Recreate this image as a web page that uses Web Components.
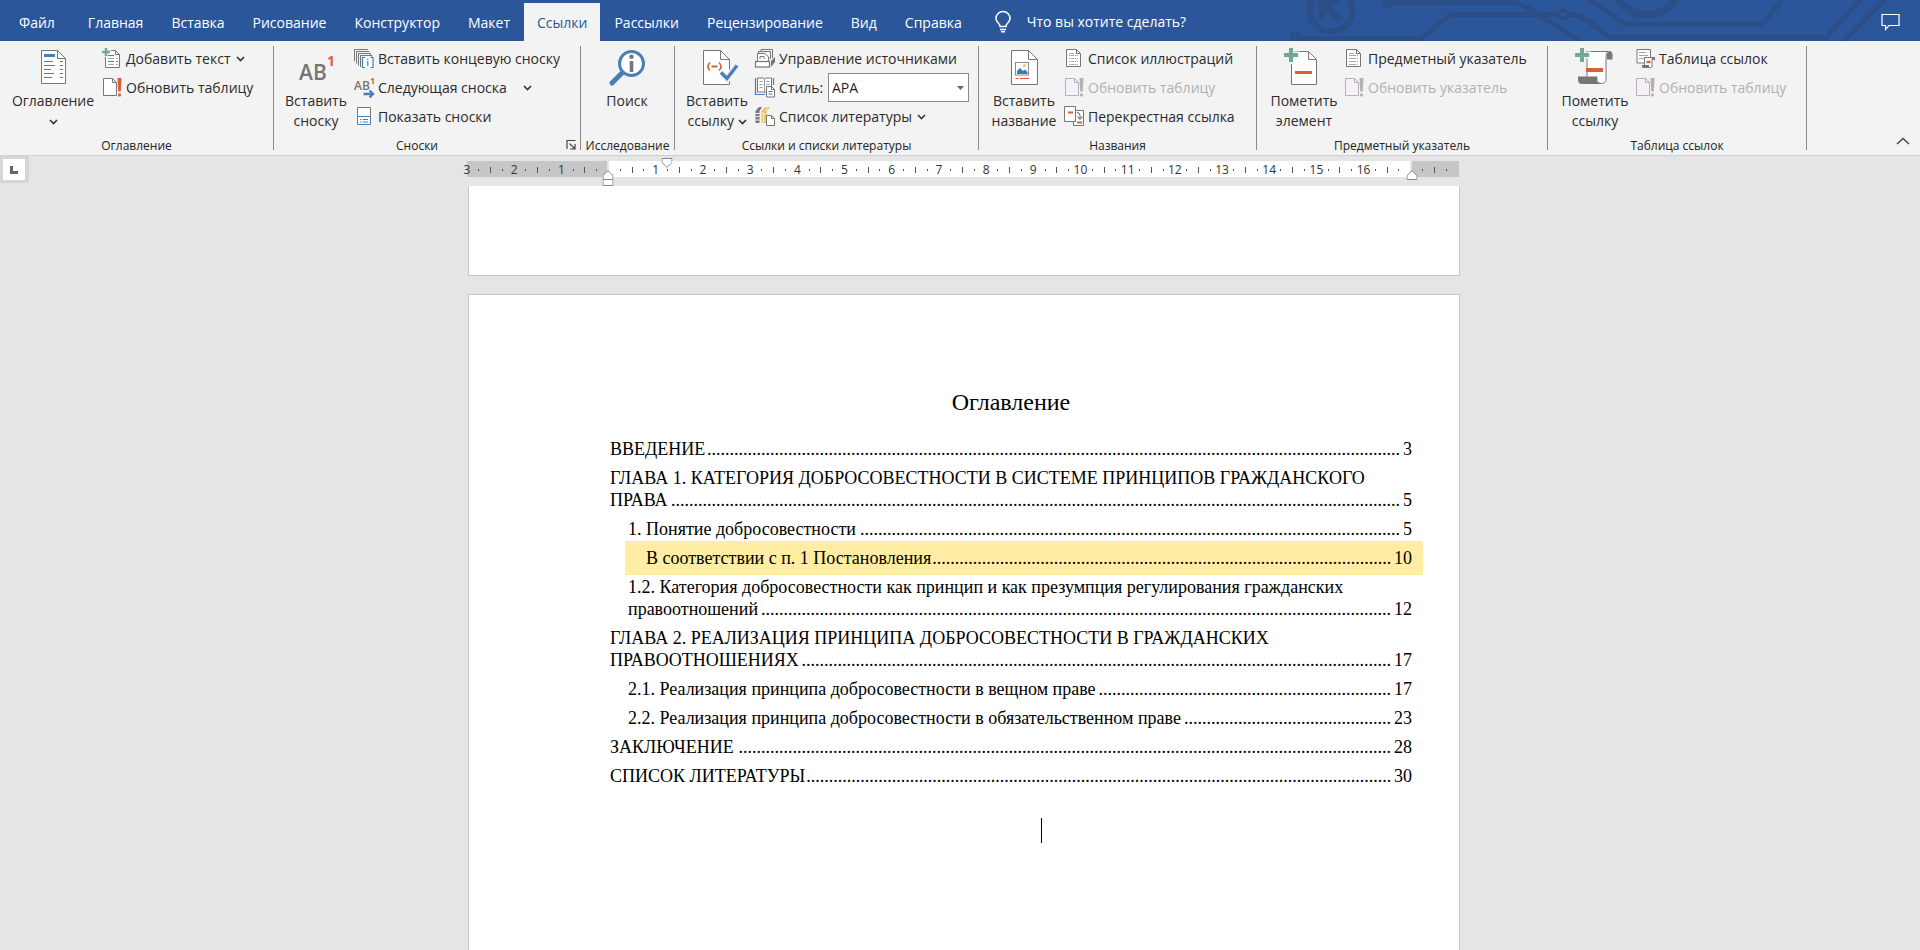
<!DOCTYPE html>
<html lang="ru">
<head>
<meta charset="utf-8">
<title>Ссылки — документ</title>
<style>
  html, body { margin: 0; height: 100%; }
  body { font: 14px/20px "Open Sans", "Noto Sans", sans-serif; color: #2b2b2b; background: #e5e5e5; overflow: hidden; }
</style>
</head>
<body>
<word-app>
  <title-bar slot="top">
    <ribbon-tab class="file">Файл</ribbon-tab>
    <ribbon-tab>Главная</ribbon-tab>
    <ribbon-tab>Вставка</ribbon-tab>
    <ribbon-tab>Рисование</ribbon-tab>
    <ribbon-tab>Конструктор</ribbon-tab>
    <ribbon-tab>Макет</ribbon-tab>
    <ribbon-tab active>Ссылки</ribbon-tab>
    <ribbon-tab>Рассылки</ribbon-tab>
    <ribbon-tab>Рецензирование</ribbon-tab>
    <ribbon-tab>Вид</ribbon-tab>
    <ribbon-tab>Справка</ribbon-tab>
  </title-bar>

  <ribbon-bar slot="top">
    <ribbon-group label="Оглавление" style="--w:274px;--lead:8px;--big:90px">
      <large-button slot="big" icon="toc">Оглавление<br><app-icon name="chevron"></app-icon></large-button>
      <small-button icon="addText" menu>Добавить текст</small-button>
      <small-button icon="update">Обновить таблицу</small-button>
    </ribbon-group>
    <ribbon-group label="Сноски" launcher style="--w:307px;--lead:8px;--big:68px">
      <large-button slot="big" icon="footnote">Вставить<br>сноску</large-button>
      <small-button icon="endnote">Вставить концевую сноску</small-button>
      <small-button icon="nextNote" menu wide>Следующая сноска</small-button>
      <small-button icon="showNotes">Показать сноски</small-button>
    </ribbon-group>
    <ribbon-group label="Исследование" style="--w:94px;--lead:12px;--big:68px">
      <large-button slot="big" icon="search">Поиск</large-button>
    </ribbon-group>
    <ribbon-group label="Ссылки и списки литературы" style="--w:304px;--lead:8px;--big:68px">
      <large-button slot="big" icon="cite">Вставить<br>ссылку <app-icon name="chevron"></app-icon></large-button>
      <small-button icon="sources">Управление источниками</small-button>
      <style-picker></style-picker>
      <small-button icon="books" menu>Список литературы</small-button>
    </ribbon-group>
    <ribbon-group label="Названия" style="--w:278px;--lead:9px;--big:72px">
      <large-button slot="big" icon="caption">Вставить<br>название</large-button>
      <small-button icon="figures">Список иллюстраций</small-button>
      <small-button icon="updateOff" disabled>Обновить таблицу</small-button>
      <small-button icon="crossRef">Перекрестная ссылка</small-button>
    </ribbon-group>
    <ribbon-group label="Предметный указатель" style="--w:291px;--lead:11px;--big:72px">
      <large-button slot="big" icon="markEntry">Пометить<br>элемент</large-button>
      <small-button icon="index">Предметный указатель</small-button>
      <small-button icon="updateOff" disabled>Обновить указатель</small-button>
    </ribbon-group>
    <ribbon-group label="Таблица ссылок" style="--w:259px;--lead:11px;--big:72px">
      <large-button slot="big" icon="markCite">Пометить<br>ссылку</large-button>
      <small-button icon="authorities">Таблица ссылок</small-button>
      <small-button icon="updateOff" disabled>Обновить таблицу</small-button>
    </ribbon-group>
  </ribbon-bar>

  <doc-ruler slot="top"></doc-ruler>

  <doc-page class="tail"></doc-page>
  <doc-page>
    <span slot="title">Оглавление</span>
    <toc-entry page="3">ВВЕДЕНИЕ</toc-entry>
    <toc-entry page="5"><span slot="first">ГЛАВА 1. КАТЕГОРИЯ ДОБРОСОВЕСТНОСТИ В СИСТЕМЕ ПРИНЦИПОВ ГРАЖДАНСКОГО</span>ПРАВА</toc-entry>
    <toc-entry page="5" level="2">1. Понятие добросовестности</toc-entry>
    <toc-entry page="10" level="3">В соответствии с п. 1 Постановления</toc-entry>
    <toc-entry page="12" level="2"><span slot="first">1.2. Категория добросовестности как принцип и как презумпция регулирования гражданских</span>правоотношений</toc-entry>
    <toc-entry page="17"><span slot="first">ГЛАВА 2. РЕАЛИЗАЦИЯ ПРИНЦИПА ДОБРОСОВЕСТНОСТИ В ГРАЖДАНСКИХ</span>ПРАВООТНОШЕНИЯХ</toc-entry>
    <toc-entry page="17" level="2">2.1. Реализация принципа добросовестности в вещном праве</toc-entry>
    <toc-entry page="23" level="2">2.2. Реализация принципа добросовестности в обязательственном праве</toc-entry>
    <toc-entry page="28">ЗАКЛЮЧЕНИЕ</toc-entry>
    <toc-entry page="30">СПИСОК ЛИТЕРАТУРЫ</toc-entry>
  </doc-page>
</word-app>

<script>
const define = (name, html, setup) => customElements.define(name, class extends HTMLElement {
  constructor() {
    super();
    this.attachShadow({ mode: 'open' });
  }
  connectedCallback() {
    if (this.shadowRoot.firstChild) return;
    this.shadowRoot.innerHTML = typeof html === 'function' ? html(this) : html;
    if (setup) setup(this, this.shadowRoot);
  }
});

/* ---- Icons ---- */
const G = '#767676', B = '#4a7ebb', R = '#d8603f', GR = '#74a795', GOLD = '#ecc77a';
const plus = (x, y, s, t) => `<path d="M${x + s / 2} ${y}V${y + s}M${x} ${y + s / 2}H${x + s}" stroke="${GR}" stroke-width="${t}" fill="none"/>`;
const sheet = (x, y, w, h, f, c = G, fill = '#fff', sw = 1) =>
  `<path d="M${x} ${y}H${x + w - f}L${x + w} ${y + f}V${y + h}H${x}Z" fill="${fill}" stroke="${c}" stroke-width="${sw}"/><path d="M${x + w - f} ${y}V${y + f}H${x + w}" fill="none" stroke="${c}" stroke-width="${sw}"/>`;
const updatePage = (c, e, fill) => sheet(1.5, 1.5, 13, 17, 4, c, fill) +
  `<path d="M15.5 1H19.5L18.8 14.5H16.2Z" fill="${e}"/><rect x="16" y="16.5" width="3" height="3" rx="1" fill="${e}"/>`;
const linedPage = (a, b) => sheet(2.5, 1.5, 14, 17, 4) +
  `<path d="M5 7.5h${a}M5 10.5h${a}M5 13.5h${a}M5 5.5h5M5 16.5h${a}" stroke="#a6a6a6" stroke-dasharray="${b}"/>`;
const ICONS = {
  chevron: [9, 6, `<path d="M1 1l3.5 3.5L8 1" fill="none" stroke="#333" stroke-width="1.6"/>`],
  bulb: [16, 22, `<path d="M5 15.5C5 12.5 1 11.5 1 7.5a7 7 0 0 1 14 0c0 4-4 5-4 8zM5 18.5h6M6 20.8h4" fill="none" stroke="#fff" stroke-width="1.5"/>`],
  comment: [19, 18, `<path d="M1 1.5H18V12.5H8L4.5 16.5V12.5H1Z" fill="none" stroke="#fff" stroke-width="1.2"/>`],
  up: [14, 8, `<path d="M1 7L7 1.5L13 7" fill="none" stroke="#444" stroke-width="1.4"/>`],
  launcher: [10, 10, `<path d="M1 9V.5H9.5M3.5 3.5l5 5M9 4V9H4" fill="none" stroke="#444" stroke-width="1.2"/>`],
  toc: [44, 45, sheet(10.5, 4.5, 24, 33, 8) +
    `<path d="M13 9.5h11" stroke="${B}" stroke-width="3"/><path d="M13 15.5h9M13 19.5h11M13 23.5h7M13 27.5h10M13 31.5h8M29 15.5h3M29 19.5h3M29 23.5h3M29 27.5h3M29 31.5h3" stroke="${B}"/>`],
  footnote: [44, 45, `<text x="5" y="34" font-size="21" font-weight="600" fill="${G}">AB</text><text x="33" y="20" font-size="14" font-weight="700" fill="${R}">1</text>`],
  search: [44, 45, `<path d="M7 37L18 26" stroke="${B}" stroke-width="5" stroke-linecap="round"/><circle cx="26.500" cy="17.500" r="12" fill="#fff" stroke="${B}" stroke-width="3"/><circle cx="26.500" cy="10.800" r="2.200" fill="${G}"/><path d="M26.500 15V26" stroke="${G}" stroke-width="3.600"/>`],
  cite: [44, 45, sheet(8.5, 4.5, 26, 34, 9) +
    `<path d="M15 16.500q-4 4 0 8M24 16.500q4 4 0 8" fill="none" stroke="${R}" stroke-width="1.600"/><path d="M16.500 20.500h6" stroke="${R}" stroke-width="2"/><path d="M26 27l6 6L42 19.500" fill="none" stroke="#f3f3f3" stroke-width="7"/><path d="M26 26.500l6 6L42 19.500" fill="none" stroke="${B}" stroke-width="3.400"/>`],
  caption: [44, 45, sheet(9.5, 4.5, 26, 34, 9) +
    `<rect x="13.500" y="16.500" width="13" height="12.500" fill="#fff" stroke="#8a8a8a"/><circle cx="22.500" cy="19.500" r="1.600" fill="${GOLD}"/><path d="M15 28v-3l3-3 3 3 2-1.500 2.500 2.500v2z" fill="#3f76b5"/><path d="M13.500 32.500h3M18 32.500h9" stroke="${R}" stroke-width="1.200"/>`],
  markEntry: [44, 45, sheet(9.5, 5.5, 25, 33, 8) +
    `<path d="M0 9H18M9 0V18" stroke="#f3f3f3" stroke-width="7"/>` + plus(2, 2, 14, 4) + `<path d="M13 26.500h17" stroke="${R}" stroke-width="3"/>`],
  markCite: [44, 45, `<path d="M12 5.500H35q-2 1-2 5V33q0 4-4 4.500H14V5.500Z" fill="#fff" stroke="${G}"/><path d="M33 5h3q3.500 0 3.500 4v4.500H34V9q0-3 2-3.500" fill="${G}"/><path d="M24 30.500v4q1 3.500 5 3.500H9q-4 0-4-4v-3.500z" fill="${G}"/><path d="M24 30.500v4q1 3 4.500 3t5-3.500" fill="#fff" stroke="${G}" stroke-width=".8"/><path d="M0 9H18M9 0V18" stroke="#f3f3f3" stroke-width="7"/>` + plus(2, 2, 14, 4) + `<path d="M13 24h17" stroke="${R}" stroke-width="4"/>`],
  addText: [22, 21, sheet(3.5, 2.5, 14, 17, 4) +
    `<path d="M6 10.500h6M14 10.500h2M6 16.500h6M14 16.500h2" stroke="#a6a6a6"/><path d="M6 7.500h6M6 13.500h6M14 13.500h2" stroke="${B}"/><path d="M0 4H9M4 0V9" stroke="#f3f3f3" stroke-width="4"/>` + plus(0, 0, 8, 2.5)],
  update: [22, 21, updatePage(G, R, '#fff')],
  updateOff: [22, 21, updatePage('#b5b0b8', '#b3b3b3', '#f6f1f8')],
  endnote: [22, 21, `<path d="M.5 13V1.500H14M2.500 15.500V3.500H15.500M4.500 17.500V5.500H16.500V8M6.500 19V7.500H18V9" fill="none" stroke="${G}"/><rect x="8" y="9" width="11" height="11" fill="#fff"/><path d="M11 9.500H8.500V19.500H11M16.500 9.500H19V19.500H16.500M13.800 13V18M13.800 10.500V12" fill="none" stroke="${B}" stroke-width="1.200"/>`],
  nextNote: [22, 21, `<text x="0" y="13" font-size="12" font-weight="600" fill="${G}">AB</text><text x="16" y="7" font-size="9" font-weight="700" fill="${R}">1</text><path d="M9 14h9v6H9z" fill="#f3f3f3"/><path d="M9.500 17H19M15.500 13.500L19 17L15.500 20.500" fill="none" stroke="${B}" stroke-width="2.400"/>`],
  showNotes: [22, 21, `<path d="M3.500 10V1.500H16.500V10" fill="#fff" stroke="${G}"/><path d="M3.500 10.500H16.500V18.500H3.500Z" fill="#fff" stroke="${B}"/><path d="M6 13.500h1.500M9 13.500h5M6 16h1.500M9 16h5" stroke="${B}"/>`],
  sources: [22, 21, `<path d="M6 3V1.500H17.500V10M3.500 5V3.500H15.500V11" fill="none" stroke="${G}"/><path d="M2.500 13V5.500H10L13.500 9V13" fill="#fff" stroke="${G}"/><path d="M5 11V8.500H9V11" fill="none" stroke="${G}"/><rect x=".5" y="13.500" width="14" height="5.500" fill="#fff" stroke="${G}" stroke-width="1.200"/><path d="M16 13l4-4v5l-4 5z" fill="${G}"/>`],
  styleBook: [22, 21, `<path d="M.5 1V17.500H10M18.500 1V8" fill="none" stroke="${B}" stroke-width="1.200"/><path d="M2.500 1H8.500L9.500 2L10.500 1H16.500V15H10.500L9.500 16L8.500 15H2.500Z" fill="#fff" stroke="${G}"/><path d="M9.500 2V15M4.500 4.500h3M4.500 7.500h3M4.500 10.500h3M11.500 4.500h3M11.500 7.500h3" stroke="#9a9a9a"/>` + sheet(11.5, 9.5, 8, 10.5, 3) + `<path d="M13.500 14.500h4M13.500 17h4" stroke="${B}"/>`],
  books: [22, 21, `<path d="M.5 5L4 1H7L4.500 5V17H.5z" fill="${G}"/><path d="M.5 7.500h4M.5 10.500h4M.5 14h4" stroke="#f3f3f3"/><path d="M6.500 5L10 1H15L12 5V17H6.500z" fill="${GOLD}"/><path d="M8.500 6v10M6.500 8h5M12 5V1" stroke="#f8e6bf"/>` + sheet(11.5, 9.5, 8, 10, 3)],
  figures: [22, 21, linedPage(9, '1.5 .6 3 .6')],
  index: [22, 21, linedPage(9, '7 1')],
  crossRef: [22, 21, `<path d="M9.500 4.500H19.500V19.500H9.500Z" fill="#fff" stroke="${G}"/><path d="M.5 .5H11.500V15.500H.5Z" fill="#fff" stroke="${G}"/><path d="M4 6.500h5M13 16.500h5" stroke="${R}" stroke-width="2"/><path d="M13 6.500q3 0 3 3v3M13.500 10.500l2.500 3 2.500-3" fill="none" stroke="#555"/>`],
  authorities: [22, 21, `<path d="M2 1.500H15.500V15H2Z" fill="#fff" stroke="${G}"/><path d="M4 4.500h7M4 7.500h9M4 10.500h5" stroke="#a6a6a6"/><path d="M9.500 9.500H19q-2 0-2 2V18q0 1.500-1.500 1.500H9.500Z" fill="#fff" stroke="${G}"/><path d="M17 9h3v3h-2.500z M7 17h7v3H8.500q-1.500 0-1.500-1.500z" fill="${G}"/><path d="M11.500 14h4" stroke="${R}" stroke-width="2.400"/>`],
};

define('app-icon', host => {
  const [w, h, body] = ICONS[host.getAttribute('name')];
  return `<style>:host{display:inline-block;flex:none}:host([name=chevron]){vertical-align:middle}
    svg{display:block;overflow:visible;font-family:"Open Sans",sans-serif}</style>
    <svg width="${w}" height="${h}" viewBox="0 0 ${w} ${h}" aria-hidden="true">${body}</svg>`;
});

/* ---- Application frame ---- */
define('word-app', `<style>
  :host{display:flex;flex-direction:column;height:100vh;overflow:hidden}
  main{flex:1;min-height:0;overflow:hidden;display:flex;flex-direction:column;align-items:center;gap:18px;padding-left:8px}
  </style><slot name="top"></slot><main><slot></slot></main>`);

define('title-bar', `<style>
  :host{display:flex;position:relative;height:38px;padding:3px 20px 0 5px;background:#2b579a;color:#fff}
  nav{display:flex}
  .art{position:absolute;right:0;top:0}
  button{all:unset;display:flex;align-items:center;gap:16px;cursor:pointer;position:relative}
  .ask{margin-left:19px}
  .comment{margin-left:auto}
  </style>
  <svg class="art" width="630" height="41" viewBox="0 0 630 41" fill="none" stroke="#2a4e85" stroke-width="5" aria-hidden="true">
    <circle cx="41" cy="10" r="21.500" stroke-width="6"/><path d="M32 19V1H50M32 1L50 20" stroke-width="7"/>
    <circle cx="98" cy="2" r="4"/><path d="M102 2.500H222Q232 3 244 12L292 42"/>
    <circle cx="5" cy="38" r="4"/><path d="M9 38.500H131L157 17Q160 14.500 165 14.500H268"/>
    <circle cx="273" cy="14.500" r="4.500" stroke-width="3.500"/><path d="M279 14.500Q288 14 297 20L320 37.500H536L572 -2"/>
    <path d="M297 -3L330 21Q334 24.500 340 24.500H468Q472 24.500 475 21L494 -2M552 43L597 -3"/>
    <circle cx="357" cy="-19" r="34" stroke-width="8"/>
  </svg>
  <nav><slot></slot></nav>
  <button class="ask"><app-icon name="bulb"></app-icon>Что вы хотите сделать?</button>
  <button class="comment" aria-label="Примечания"><app-icon name="comment"></app-icon></button>`);

define('ribbon-tab', `<style>
  :host{display:block}
  :host(.file){margin-right:5px}
  button{all:unset;box-sizing:border-box;display:flex;align-items:center;height:38px;padding:2px 14px 0;cursor:pointer;white-space:nowrap;color:#fff}
  :host([active]) button{background:#f3f3f3;color:#2b579a;padding:2px 13px 0}
  </style><button><slot></slot></button>`);

define('ribbon-bar', `<style>
  :host{display:flex;height:114px;background:#f3f3f3;border-bottom:1px solid #d0d0d0;flex:none}
  .collapse{all:unset;margin:auto 10px 5px auto;cursor:pointer}
  </style><slot></slot><button class="collapse" aria-label="Свернуть ленту"><app-icon name="up"></app-icon></button>`);

define('ribbon-group', host => `<style>
  :host{display:flex;width:var(--w);flex:none}
  .body{flex:1;min-width:0;display:flex;flex-direction:column}
  .tools{flex:1;display:flex;gap:4px;padding:3px 0 0 var(--lead)}
  .big{width:var(--big);flex:none}
  .col{display:flex;flex-direction:column;align-items:flex-start}
  .caption{display:flex;align-items:center;font-size:12px;line-height:18px;color:#222;white-space:nowrap}
  .caption span{flex:1;text-align:center}
  .launch{all:unset;flex:none;padding:0 4px 0 6px;cursor:pointer}
  .rule{width:1px;margin:5px 0;background:#8a8a8a}
  </style>
  <div class="body"><div class="tools"><div class="big"><slot name="big"></slot></div><div class="col"><slot></slot></div></div>
  <div class="caption"><span>${host.getAttribute('label')}</span>${host.hasAttribute('launcher') ? '<button class="launch" aria-label="Параметры сносок"><app-icon name="launcher"></app-icon></button>' : ''}</div></div>
  <div class="rule"></div>`);

define('large-button', host => `<style>
  :host{display:block;margin-top:2px}
  button{all:unset;display:flex;flex-direction:column;align-items:center;width:100%;cursor:pointer}
  span{text-align:center;white-space:nowrap}
  </style><button><app-icon name="${host.getAttribute('icon')}"></app-icon><span><slot></slot></span></button>`);

define('small-button', host => `<style>
  :host{display:block}
  button{all:unset;display:flex;align-items:center;gap:2px;height:29px;white-space:nowrap;cursor:pointer}
  button:disabled{color:#b1b1b1;cursor:default}
  .arrow{margin-left:3px}
  :host([wide]) .arrow{margin-left:14px}
  </style><button ${host.hasAttribute('disabled') ? 'disabled' : ''}><app-icon name="${host.getAttribute('icon')}"></app-icon><span><slot></slot></span>${host.hasAttribute('menu') ? '<app-icon class="arrow" name="chevron"></app-icon>' : ''}</button>`);

define('style-picker', `<style>
  :host{display:flex;align-items:center;gap:2px;width:214px;height:29px}
  .box{display:grid;align-items:center;margin-left:auto;width:141px}
  .box>*{grid-area:1/1}
  select{appearance:none;box-sizing:border-box;width:100%;height:29px;margin:0;padding:0 20px 0 3px;border:1px solid #8a8a8a;border-radius:0;background:#fff;color:#1f1f1f;font:inherit}
  svg{justify-self:end;margin-right:5px;pointer-events:none}
  </style><app-icon name="styleBook"></app-icon><label for="style">Стиль:</label>
  <div class="box"><select id="style"><option>APA</option><option>MLA</option><option>Chicago</option></select>
  <svg width="7" height="4" viewBox="0 0 7 4"><path d="M0 0H7L3.500 4Z" fill="#666"/></svg></div>`);

/* ---- Ruler: four marks to a centimetre, zero at mark 12 ---- */
define('doc-ruler', () => {
  let marks = '';
  for (let i = 0; i < 85; i++) {
    const n = Math.abs(i / 4 - 3);
    const kind = i === 12 || i === 80 || i === 84 ? '' : i % 4 === 0 ? n : i % 4 === 2 ? '<b></b>' : '<u></u>';
    marks += `<i>${kind}</i>`;
  }
  return `<style>
  :host{display:grid;grid-template-columns:minmax(0,1fr);height:30px;flex:none;align-items:start;background:#e5e5e5}
  .corner{all:unset;grid-area:1/1;box-sizing:border-box;width:29px;height:27px;padding:3px 4px 3px 3px;background:#d6d6d6;display:flex}
  .corner span{flex:1;background:#fff;display:grid;place-content:center}
  .center{grid-area:1/1;display:flex;justify-content:center;padding:5px 0 0 6px;pointer-events:none}
  .strip{position:relative;width:992px;height:16px;display:flex;justify-content:space-between;align-items:center;
    background:linear-gradient(90deg,#c6c6c6 0 14.15%,#e5e5e5 14.15% 14.35%,#fff 14.35% 95.05%,#e5e5e5 95.05% 95.25%,#c6c6c6 95.25%)}
  i{width:0;padding-top:2px;display:flex;justify-content:center;font:12px/16px "Open Sans",sans-serif;color:#333}
  b{flex:none;width:1px;height:6px;background:#555}
  u{flex:none;width:1px;height:2px;background:#555}
  .mark{position:absolute;transform:translateX(-50%)}
  </style>
  <button class="corner" aria-label="Табуляция"><span><svg width="8" height="8" viewBox="0 0 8 8"><path d="M1.500 0V6.500H8" fill="none" stroke="#666" stroke-width="3"/></svg></span></button>
  <div class="center"><div class="strip">${marks}
    <svg class="mark" style="left:20.200%;top:-3px" width="11" height="10" viewBox="0 0 11 10"><path d="M.5 .5H10.500V4.500L5.500 9.500L.5 4.500Z" fill="#fff" stroke="#888"/></svg>
    <svg class="mark" style="left:14.250%;top:9px" width="11" height="16" viewBox="0 0 11 16"><path d="M.5 15.500V5.500L5.500 .7L10.500 5.500V15.500ZM.5 9.500H10.500" fill="#fff" stroke="#888"/></svg>
    <svg class="mark" style="left:95.300%;top:9px" width="11" height="10" viewBox="0 0 11 10"><path d="M.5 9.500V5.500L5.500 .7L10.500 5.500V9.500Z" fill="#fff" stroke="#888"/></svg>
  </div></div>`;
});

/* ---- Document ---- */
define('doc-page', host => `<style>
  :host{display:block;box-sizing:border-box;width:992px;max-width:100%;flex:1 0 auto;padding:92px 47px 0 141px;background:#fff;border:1px solid #c6c6c6;border-bottom:0;
    font:18px/22px "Liberation Serif","Times New Roman",serif;color:#000}
  :host(.tail){flex:none;height:90px;padding:0;border-top:0;border-bottom:1px solid #c6c6c6}
  h1{margin:0 0 21px;font:24px/30px "Liberation Serif","Times New Roman",serif;text-align:center}
  .caret{width:1px;height:25px;margin:31px 0 0 431px;background:#000}
  </style>${host.classList.contains('tail') ? '' : '<h1><slot name="title"></slot></h1><slot></slot><div class="caret"></div>'}`);

define('toc-entry', host => `<style>
  :host{display:block;margin-bottom:7px}
  :host([level="2"]){padding-left:18px}
  :host([level="3"]){margin:-6px -11px 1px 15px;padding:6px 11px 6px 21px;background:#ffeda3}
  a{display:block;color:inherit;text-decoration:none;white-space:nowrap}
  .line{display:flex}
  .dots{flex:1;min-width:0;text-align:right;margin:0 3px 0 1px}
  </style><a href="#page-${host.getAttribute('page')}"><slot name="first"></slot><span class="line"><span><slot></slot></span><span class="dots"></span><span>${host.getAttribute('page')}</span></span></a>`,
  (host, root) => {
    /* The leader is filled with as many dots as its free width holds. */
    const dots = root.querySelector('.dots');
    const fit = () => {
      const pitch = parseFloat(getComputedStyle(dots).fontSize) / 4;
      dots.textContent = '.'.repeat(Math.max(0, Math.floor(dots.clientWidth / pitch)));
    };
    new ResizeObserver(fit).observe(dots);
  });
</script>
</body>
</html>
